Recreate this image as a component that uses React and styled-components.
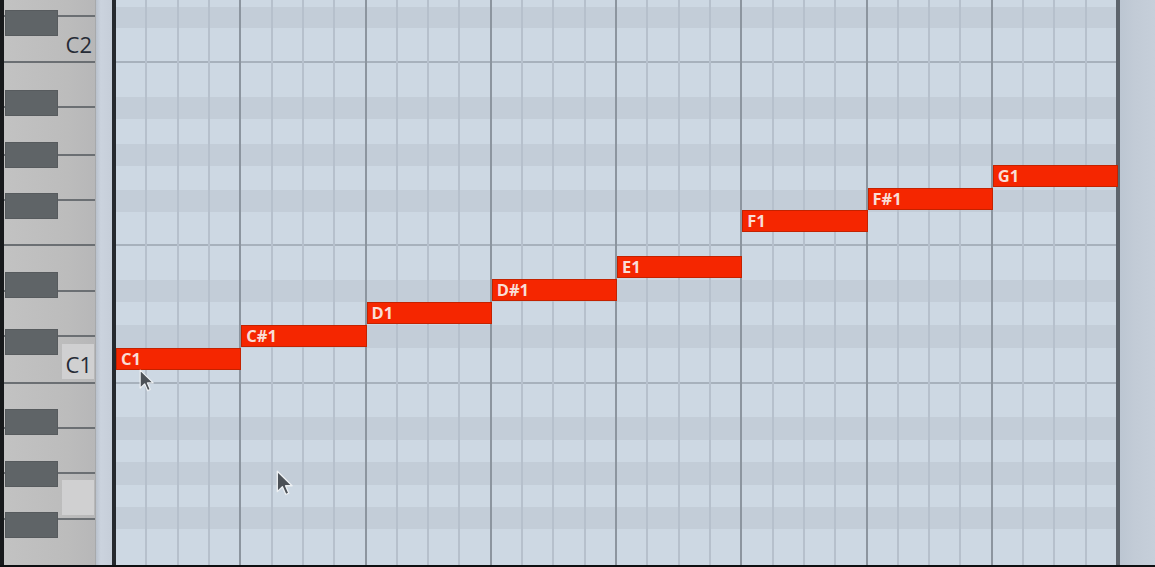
import styled, { createGlobalStyle } from "styled-components";

const GlobalStyle = createGlobalStyle`
  html, body {
    margin: 0;
    padding: 0;
    background: #0d0f11;
  }
`;

// lane bands of the note grid, top to bottom (px heights follow the key layout)
const lanes = [
  { h: 7 },
  { h: 21, sharp: true },
  { h: 35, split: true },
  { h: 34 },
  { h: 22, sharp: true },
  { h: 25 },
  { h: 22, sharp: true },
  { h: 24 },
  { h: 22, sharp: true },
  { h: 34, split: true },
  { h: 34 },
  { h: 22, sharp: true },
  { h: 23 },
  { h: 23, sharp: true },
  { h: 36, split: true },
  { h: 33 },
  { h: 23, sharp: true },
  { h: 22 },
  { h: 23, sharp: true },
  { h: 22 },
  { h: 22, sharp: true },
  { h: 36 },
];

// white keys of the keyboard, with the black key that sits over their top edge
const keys = [
  { h: 17 },
  { h: 46, black: -7, label: "C2", shift: 10 },
  { h: 45 },
  { h: 48, black: -18 },
  { h: 45, black: -14 },
  { h: 45, black: -8 },
  { h: 46 },
  { h: 45, black: -20 },
  { h: 47, black: -8, label: "C1", boxed: true, shift: 4 },
  { h: 45 },
  { h: 45, black: -20 },
  { h: 46, black: -13, label: "", boxed: true, shift: 2 },
  { h: 45, black: -8, last: true },
];

const notes = [
  { name: "C1", bar: 0, top: 348 },
  { name: "C#1", bar: 1, top: 325 },
  { name: "D1", bar: 2, top: 302 },
  { name: "D#1", bar: 3, top: 279 },
  { name: "E1", bar: 4, top: 256 },
  { name: "F1", bar: 5, top: 210 },
  { name: "F#1", bar: 6, top: 188 },
  { name: "G1", bar: 7, top: 165 },
];

const beats = Array.from({ length: 32 }, (_, i) => i);

function Pointer({ x, y, w, h }) {
  return (
    <Cursor $x={x} $y={y} width={w} height={h} viewBox="0 0 13 20">
      <path
        d="M1 1 V16.6 L4.9 12.9 L7.5 18.8 L9.8 17.8 L7.3 12.1 H12.3 Z"
        fill="#4c5157"
        stroke="#eef1f4"
        strokeWidth="1"
        strokeLinejoin="round"
      />
    </Cursor>
  );
}

export default function App() {
  return (
    <>
      <GlobalStyle />
      <Frame>
        <LeftEdge />
        <Keyboard>
          {keys.map((k, i) => (
            <WhiteKey key={i} $h={k.h} $last={k.last}>
              {k.black !== undefined && <BlackKey $offset={k.black} />}
              {k.label !== undefined && (
                <KeyTag $boxed={k.boxed} $shift={k.shift}>
                  {k.label}
                </KeyTag>
              )}
            </WhiteKey>
          ))}
        </Keyboard>
        <Gutter />
        <StartLine />
        <Grid>
          {lanes.map((l, i) => (
            <Lane key={i} $h={l.h} $sharp={l.sharp} $split={l.split} />
          ))}
          <BeatLayer>
            {beats.map((b) => (
              <Beat key={b} $bar={b % 4 === 3} $last={b === 31} />
            ))}
          </BeatLayer>
          {notes.map((n) => (
            <Note key={n.name} $bar={n.bar} $top={n.top}>
              {n.name}
            </Note>
          ))}
        </Grid>
        <EndLine />
        <RightStrip />
        <Pointer x={139} y={367} w={15} h={27} />
        <Pointer x={276} y={468} w={17} h={30} />
      </Frame>
    </>
  );
}

const Frame = styled.div`
  position: relative;
  display: flex;
  width: 1155px;
  height: 567px;
  box-sizing: border-box;
  border-bottom: 2px solid #0d0f11;
  background: #0d0f11;
  overflow: hidden;
`;

const LeftEdge = styled.div`
  width: 4px;
  background: #17191b;
`;

const Keyboard = styled.div`
  width: 92px;
  display: flex;
  flex-direction: column;
  background: linear-gradient(to right, #c2c2c2, #bcbcbc 70%, #b7b7b8);
  border-right: 1px solid #a7a9ab;
  box-sizing: border-box;
`;

const WhiteKey = styled.div`
  position: relative;
  height: ${(p) => p.$h}px;
  flex: none;
  box-sizing: border-box;
  border-bottom: ${(p) => (p.$last ? "none" : "2px solid #6b6f73")};
  display: flex;
  align-items: center;
  justify-content: flex-end;
  padding-right: 1px;
`;

const BlackKey = styled.div`
  position: absolute;
  left: 1px;
  top: ${(p) => p.$offset}px;
  width: 53px;
  height: 26px;
  background: #5f6467;
  border: 1px solid #575b5e;
  box-sizing: border-box;
  z-index: 1;
`;

const KeyTag = styled.div`
  width: 32px;
  height: ${(p) => (p.$boxed ? "35px" : "auto")};
  margin-top: ${(p) => p.$shift || 0}px;
  background: ${(p) => (p.$boxed ? "#d0d0d1" : "transparent")};
  color: #262b36;
  font-family: "Open Sans", "Liberation Sans", sans-serif;
  font-size: 22px;
  line-height: ${(p) => (p.$boxed ? "40px" : "30px")};
  text-align: right;
  padding-right: 2px;
  box-sizing: border-box;
`;

const Gutter = styled.div`
  width: 16px;
  background: linear-gradient(to right, #b9c1cc, #cbd3de 30%, #c6ced9);
`;

const StartLine = styled.div`
  width: 4px;
  background: #25292e;
`;

const Grid = styled.div`
  position: relative;
  width: 1002px;
  display: flex;
  flex-direction: column;
`;

const Lane = styled.div`
  height: ${(p) => p.$h}px;
  flex: none;
  box-sizing: border-box;
  background: ${(p) => (p.$sharp ? "#c3cdd8" : "#cdd8e3")};
  border-bottom: ${(p) => (p.$split ? "2px solid #a7b1bc" : "none")};
`;

const BeatLayer = styled.div`
  position: absolute;
  inset: 0;
  display: flex;
  pointer-events: none;
`;

const Beat = styled.div`
  flex: 1;
  box-sizing: border-box;
  border-right: ${(p) =>
    p.$last ? "2px solid #5d646c" : p.$bar ? "2px solid #8c959f" : "2px solid #b6c0cc"};
`;

const Note = styled.div`
  position: absolute;
  left: ${(p) => p.$bar * 12.5}%;
  top: ${(p) => p.$top}px;
  width: 12.5%;
  height: 22px;
  box-sizing: border-box;
  background: #f52600;
  border: 1px solid #c42200;
  color: #f9ddd6;
  font-family: "Open Sans", "Liberation Sans", sans-serif;
  font-weight: 700;
  font-size: 16.5px;
  line-height: 20px;
  padding-left: 4px;
  z-index: 2;
`;

const EndLine = styled.div`
  width: 2px;
  background: #5d646c;
`;

const RightStrip = styled.div`
  flex: 1;
  background: linear-gradient(to right, #bcc6d2, #c2cbd6 40%, #c6cfda);
`;

const Cursor = styled.svg`
  position: absolute;
  left: ${(p) => p.$x}px;
  top: ${(p) => p.$y}px;
  z-index: 5;
  filter: blur(0.3px);
`;
